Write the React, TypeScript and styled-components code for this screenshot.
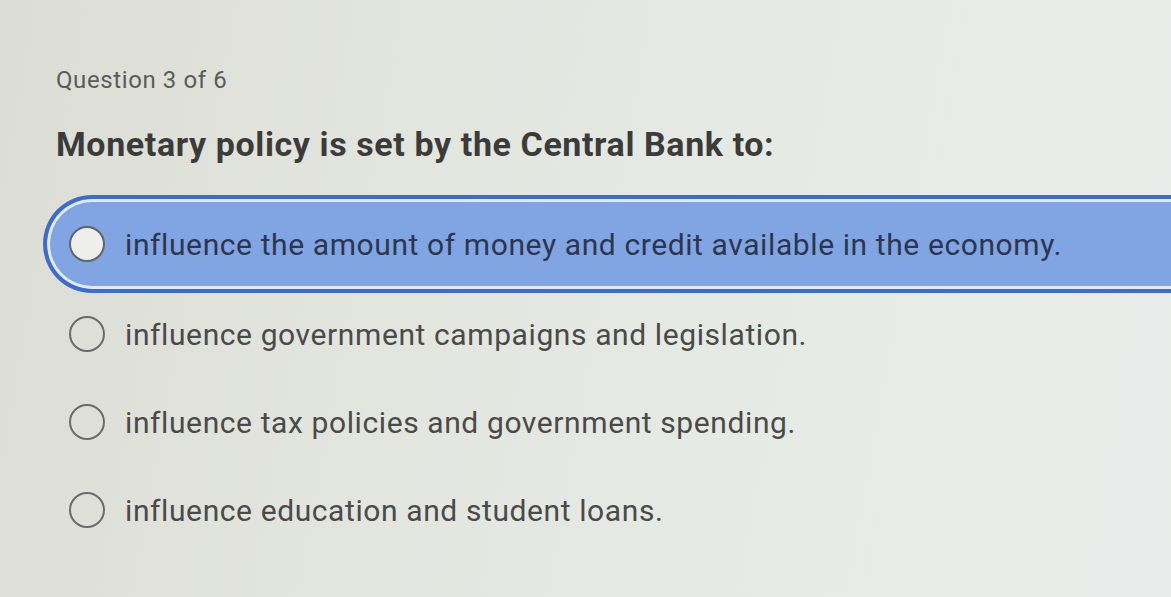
import React, { useState } from "react";
import styled, { createGlobalStyle, css } from "styled-components";

const GlobalStyle = createGlobalStyle`
  html, body {
    margin: 0;
    padding: 0;
    height: 100%;
  }
  body {
    background: linear-gradient(100deg, #dcddd5 0%, #e3e6df 35%, #e7ebe6 70%, #e9ecea 100%);
    font-family: Roboto, "Noto Sans", sans-serif;
    overflow: hidden;
  }
`;

const Page = styled.div`
  width: 1171px;
  height: 597px;
  padding: 66px 0 0 56px;
  box-sizing: border-box;
  overflow: hidden;
`;

const Counter = styled.div`
  font-size: 24px;
  line-height: 28px;
  letter-spacing: 0.6px;
  color: #5b5c5a;
`;

const Question = styled.h2`
  margin: 32px 0 0 0;
  font-size: 34px;
  line-height: 36px;
  letter-spacing: 0.6px;
  font-weight: 700;
  color: #3b3c3a;
`;

const List = styled.ul`
  list-style: none;
  margin: 40px 0 0 -13px;
  padding: 0;
  display: flex;
  flex-direction: column;
`;

const Option = styled.li<{ $selected?: boolean }>`
  display: flex;
  align-items: center;
  gap: 20px;
  height: 88px;
  box-sizing: border-box;
  padding-left: 22px;
  margin-right: -60px;
  border: 4px solid transparent;
  border-right: none;
  border-radius: 50px 0 0 50px;
  cursor: pointer;
  ${(p) =>
    p.$selected &&
    css`
      height: 98px;
      margin-top: -7px;
      margin-bottom: -3px;
      border-color: #3d6dcc;
      background: #80a5e2;
      box-shadow: inset 0 0 0 3px #e2eaf6;
    `}
`;

const Radio = styled.span<{ $selected?: boolean }>`
  width: 36px;
  height: 36px;
  flex: 0 0 36px;
  box-sizing: border-box;
  border-radius: 50%;
  border: 2.5px solid ${(p) => (p.$selected ? "#5f6470" : "#6b6c6a")};
  background: ${(p) => (p.$selected ? "#eeeeea" : "transparent")};
`;

const Label = styled.span<{ $selected?: boolean }>`
  font-size: 30px;
  letter-spacing: 0.6px;
  color: ${(p) => (p.$selected ? "#2c3650" : "#4a4b49")};
  white-space: nowrap;
`;

const answers = [
  "influence the amount of money and credit available in the economy.",
  "influence government campaigns and legislation.",
  "influence tax policies and government spending.",
  "influence education and student loans.",
];

export default function App() {
  const [selected, setSelected] = useState(0);

  return (
    <Page>
      <GlobalStyle />
      <Counter>Question 3 of 6</Counter>
      <Question>Monetary policy is set by the Central Bank to:</Question>
      <List>
        {answers.map((a, i) => (
          <Option key={a} $selected={selected === i} onClick={() => setSelected(i)}>
            <Radio $selected={selected === i} />
            <Label $selected={selected === i}>{a}</Label>
          </Option>
        ))}
      </List>
    </Page>
  );
}
